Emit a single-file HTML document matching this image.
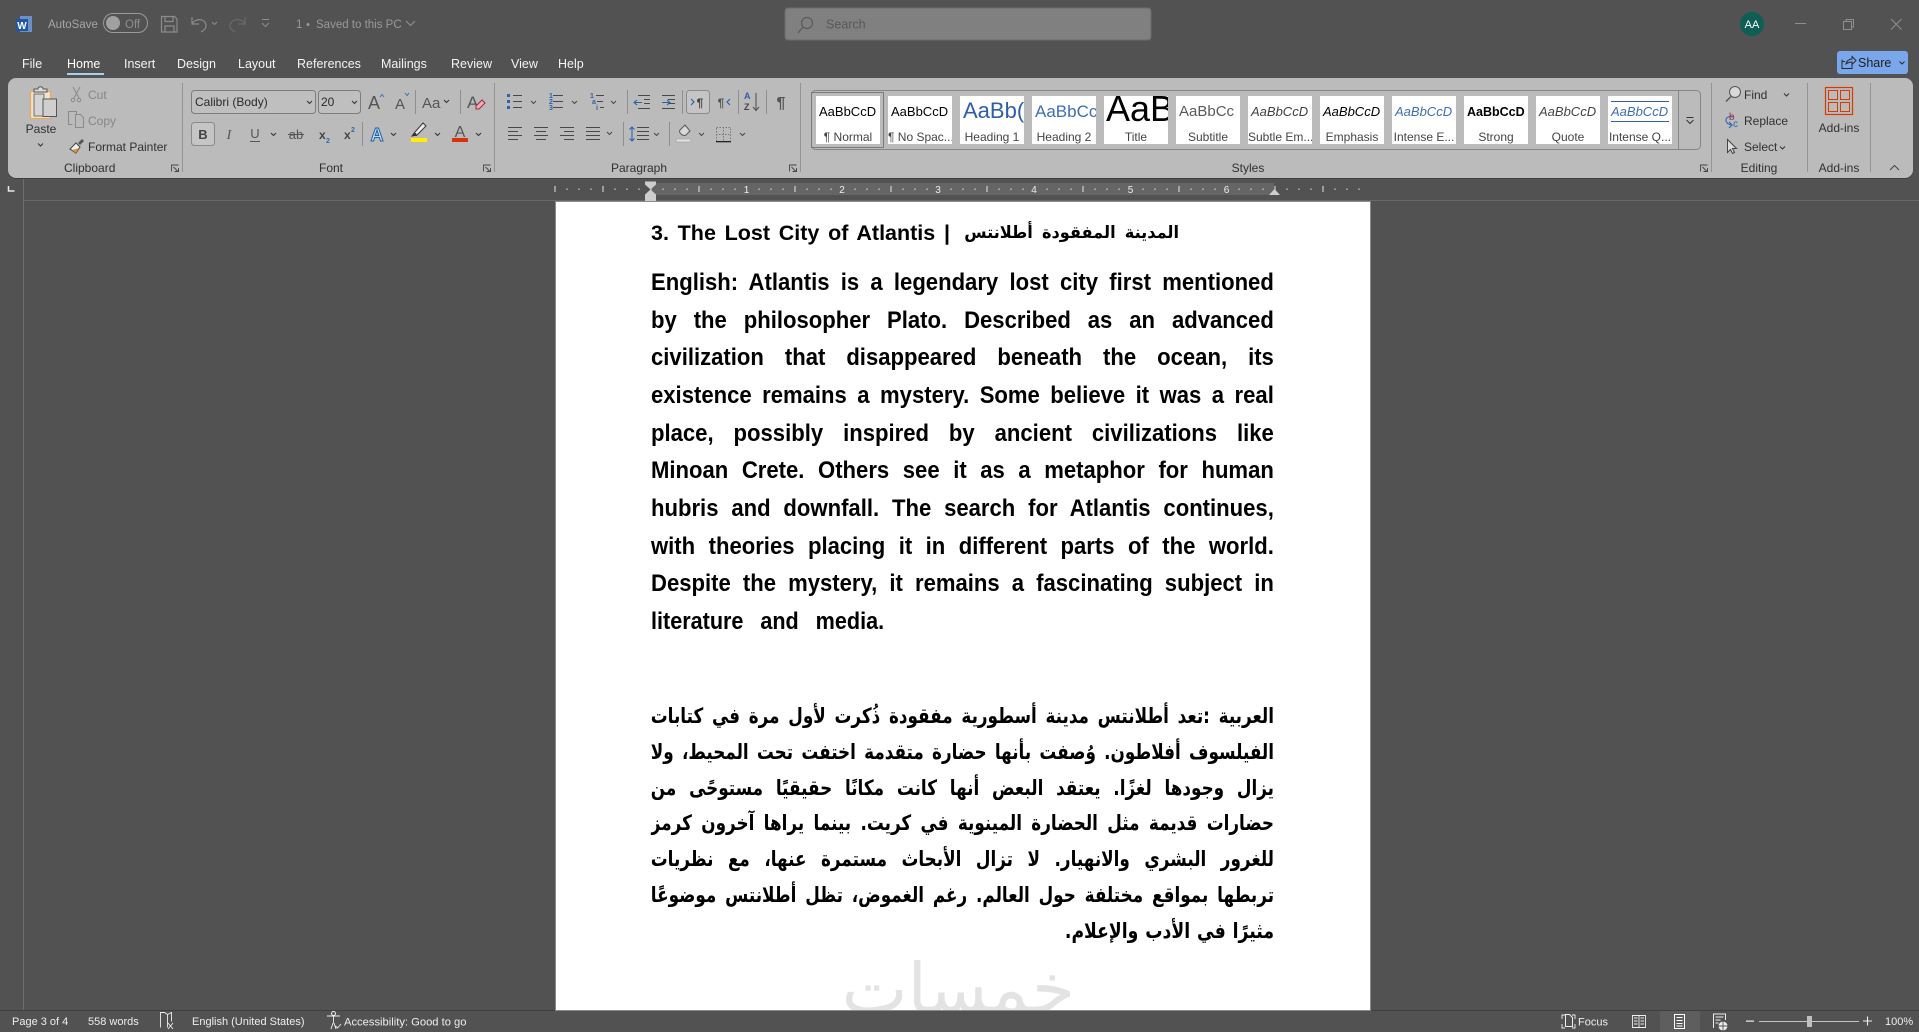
<!DOCTYPE html>
<html lang="en"><head><meta charset="utf-8"><title>Word</title>
<style>
html,body{margin:0;padding:0;width:1919px;height:1032px;overflow:hidden;background:#525252}
body{position:relative;font-family:"Liberation Sans",sans-serif}
svg{position:absolute;left:0;top:0}
svg text{font-family:"Liberation Sans",sans-serif;font-size:12px;fill:#303030}
#page{position:absolute;left:556px;top:202px;width:814px;height:808px;background:#fff;overflow:hidden;box-shadow:0 0 0 1px #8a8a8a}
.l{position:absolute;white-space:normal;color:#000;font-weight:bold;text-align:justify;text-align-last:justify;height:36px;line-height:36px;overflow:hidden}
.e{font-family:"Liberation Sans",sans-serif;font-size:24px;left:95px;transform-origin:0 50%;transform:scaleX(.92);width:677px}
.a{font-family:"DejaVu Sans",sans-serif;font-size:21px;direction:rtl;transform-origin:100% 50%;transform:scaleX(.8);right:96px;width:779px}
.tile{position:absolute;top:96px;width:64px;height:48px;background:#fff;overflow:hidden}
.tile b{position:absolute;left:3px;top:0;height:32px;line-height:32px;white-space:nowrap;font-weight:normal;font-size:13px;color:#000}
.tile i{position:absolute;left:0;right:0;top:33px;font-style:normal;text-align:center;font-size:12px;line-height:16px;color:#444;white-space:nowrap;overflow:hidden}
</style></head><body>

<svg width="1919" height="1032" viewBox="0 0 1919 1032" xmlns="http://www.w3.org/2000/svg">
<!-- lines behind page -->
<rect x="23" y="178" width="1" height="832" fill="#6e6e6e"/>
<rect x="24" y="200" width="1895" height="1" fill="#676767"/>

<!-- title bar -->
<rect x="20" y="16" width="12" height="16" fill="#6d8fc4"/>
<rect x="16" y="19" width="12" height="12" fill="#1f57a8"/>
<text x="22" y="29" text-anchor="middle" style="font-size:10px;font-weight:bold;fill:#fff">W</text>
<text x="48" y="28" style="font-size:11.5px;fill:#a6a6a6">AutoSave</text>
<rect x="103.500" y="13.500" width="44" height="19" rx="9.500" fill="none" stroke="#9a9a9a"/>
<circle cx="113" cy="23" r="7" fill="#a0a0a0"/>
<text x="125" y="28" style="font-size:11.5px;fill:#8f8f8f">Off</text>
<g fill="none" stroke="#8c8c8c" stroke-width="1.200">
<path d="M161.500 16.500h13l2.500 2.500v13h-15.500z"/><path d="M165 16.500v5h8v-5M165 32v-6h9v6"/>
<path d="M192 17v7h7M192 24c3-6 13-6 14 1 .5 4-3 6-5 7"/>
<path d="M212 22l2.500 2.500L217 22" stroke-width="1"/>
<path d="M245 17v7h-7M245 24c-3-6-13-6-15 1-.5 4 3 6 5 7" stroke="#6a6a6a"/>
<path d="M262 19.500h7M262 23l3.500 3.500L269 23" stroke-width="1"/>
<path d="M406 21l4.500 4.500L415 21"/>
</g>
<text x="296" y="28" style="font-size:11.5px;fill:#999">1</text>
<circle cx="308" cy="24.500" r="1.500" fill="#999"/>
<text x="316" y="28" style="font-size:11.5px;fill:#999">Saved to this PC</text>

<!-- search -->
<rect x="785" y="8" width="366" height="32" rx="3" fill="#808080" stroke="#6b6b6b"/>
<circle cx="807" cy="23" r="5.500" fill="none" stroke="#5b5b5b" stroke-width="1.200"/>
<path d="M803 27l-5 6" stroke="#5b5b5b" stroke-width="1.300"/>
<text x="826" y="28.500" style="font-size:12.500px;fill:#575757">Search</text>

<!-- window controls -->
<circle cx="1752" cy="24" r="12" fill="#0e5e55"/>
<text x="1752" y="28" text-anchor="middle" style="font-size:11px;fill:#fff">AA</text>
<g fill="none" stroke="#8f8f8f" stroke-width="1">
<path d="M1795 23.500h11"/><rect x="1843.500" y="21.500" width="8" height="8"/><path d="M1846 21.500v-2h7.500v7.500h-2"/>
<path d="M1891 19l10.500 10.500M1901.500 19L1891 29.500"/>
</g>

<!-- share -->
<rect x="1837" y="51" width="71" height="23" rx="3" fill="#7aa7ec"/>
<path d="M1842 59.500v9h10v-4M1842 61.500h3M1846 64c.5-3 3-5 6-5v-2.500l4 4-4 4v-2.500c-2 0-4 .5-6 2z" fill="none" stroke="#2a2a2a"/>
<text x="1858" y="67" style="font-size:12.500px;fill:#1e1e1e">Share</text>
<path d="M1899.500 61.500l2.500 2.500 2.500-2.500" fill="none" stroke="#2a2a2a"/>

<!-- tabs -->
<g style="font-size:13px">
<text x="22" y="68" style="font-size:12.500px;fill:#f4f4f4">File</text>
<text x="67" y="68" style="font-size:12.500px;fill:#fff;font-weight:400">Home</text>
<text x="124" y="68" style="font-size:12.500px;fill:#f4f4f4">Insert</text>
<text x="177" y="68" style="font-size:12.500px;fill:#f4f4f4">Design</text>
<text x="238" y="68" style="font-size:12.500px;fill:#f4f4f4">Layout</text>
<text x="297" y="68" style="font-size:12.500px;fill:#f4f4f4">References</text>
<text x="381" y="68" style="font-size:12.500px;fill:#f4f4f4">Mailings</text>
<text x="451" y="68" style="font-size:12.500px;fill:#f4f4f4">Review</text>
<text x="511" y="68" style="font-size:12.500px;fill:#f4f4f4">View</text>
<text x="558" y="68" style="font-size:12.500px;fill:#f4f4f4">Help</text>
</g>
<rect x="67" y="73" width="37" height="2" fill="#a6d0f2"/>

<!-- ribbon -->
<rect x="8" y="79" width="1905" height="100" rx="8" fill="#3e3e3e"/>
<rect x="8" y="78" width="1905" height="100" rx="8" fill="#bbb"/>
<g fill="#949494">
<rect x="182" y="83" width="1" height="89"/><rect x="494" y="83" width="1" height="89"/><rect x="800" y="83" width="1" height="89"/>
<rect x="1711" y="83" width="1" height="89"/><rect x="1807" y="83" width="1" height="89"/><rect x="1870" y="83" width="1" height="89"/>
</g>

<!-- clipboard -->
<path d="M30.500 91.500h20v27h-20z" fill="#f2e4cb" stroke="#e9a860" stroke-width="1.300"/>
<path d="M34 92v-3h4c0-3 5-3 5 0h4v3z" fill="#ddd" stroke="#555"/>
<rect x="34" y="94" width="10" height="22" fill="#d4d4d4" stroke="#555" stroke-width=".8"/>
<rect x="43" y="99" width="13.500" height="17.500" fill="#cfcfcf" stroke="#555"/>
<text x="41" y="133" text-anchor="middle">Paste</text>
<path d="M38 143.500l2.500 2.500 2.500-2.500" fill="none" stroke="#333"/>
<g fill="none" stroke="#8a8a8a">
<path d="M73 87l6 11M80 87l-6 11"/><circle cx="73" cy="100" r="1.800"/><circle cx="79" cy="100" r="1.800"/>
<path d="M72.500 124.500h-4v-13h8v3"/><path d="M75.500 114.500h5l3 3v10h-8z"/>
</g>
<text x="88" y="99" style="fill:#868686">Cut</text>
<text x="88" y="125" style="fill:#868686">Copy</text>
<path d="M70 149l6-6 4 4-4 6z" fill="#f2f2f2" stroke="#444"/>
<path d="M72 150l4 3 3-5z" fill="#e8912d"/>
<path d="M78 143l4-4 2 2-4 4z" fill="#555"/>
<text x="88" y="151">Format Painter</text>
<text x="64" y="172">Clipboard</text>

<g fill="none" stroke="#444" stroke-width=".9" id="launch">
<path d="M171.500 171.500v-6.500h7M178.500 168v3.500h-4M173.500 167l4.500 4.500"/>
<path d="M483.500 171.500v-6.500h7M490.500 168v3.500h-4M485.500 167l4.500 4.500"/>
<path d="M789.500 171.500v-6.500h7M796.500 168v3.500h-4M791.500 167l4.500 4.500"/>
<path d="M1700.500 171.500v-6.500h7M1707.500 168v3.500h-4M1702.500 167l4.500 4.500"/>
</g>

<!-- font -->
<rect x="191.500" y="90.500" width="124" height="23" rx="3" fill="#bfbfbf" stroke="#7d7d7d"/>
<rect x="318.500" y="90.500" width="42" height="23" rx="3" fill="#bfbfbf" stroke="#7d7d7d"/>
<text x="195" y="106" style="fill:#2a2a2a">Calibri (Body)</text>
<text x="321" y="106" style="fill:#2a2a2a">20</text>
<g fill="none" stroke="#333">
<path d="M307 101l2.500 2.500 2.500-2.500M352 101l2.500 2.500 2.500-2.500M444 100l2.500 2.500 2.500-2.500"/>
</g>
<text x="368" y="109" style="font-size:18px;fill:#555">A</text>
<path d="M380 97l2-2.500 2 2.500" fill="none" stroke="#3a6fb0"/>
<text x="395" y="109" style="font-size:15px;fill:#555">A</text>
<path d="M405 93l2 2.500 2-2.500" fill="none" stroke="#3a6fb0"/>
<rect x="415" y="90" width="1" height="24" fill="#8f8f8f"/>
<text x="422" y="108" style="font-size:15px;fill:#555">Aa</text>
<rect x="460" y="90" width="1" height="24" fill="#8f8f8f"/>
<text x="467" y="108" style="font-size:17px;fill:#555">A</text>
<path d="M476 106l6-6 3 3-6 6h-3z" fill="#e8b0b8" stroke="#a0283a"/>

<rect x="191.500" y="122.500" width="23" height="23" rx="3" fill="#c5c5c5" stroke="#8a8a8a"/>
<text x="203" y="139" text-anchor="middle" style="font-weight:bold;font-size:13px;fill:#444">B</text>
<text x="229" y="139" text-anchor="middle" style="font-family:'Liberation Serif',serif;font-style:italic;font-size:14px;fill:#555">I</text>
<text x="255" y="138" text-anchor="middle" style="font-size:13px;fill:#555">U</text>
<rect x="250" y="141" width="10" height="1" fill="#555"/>
<text x="296" y="139" text-anchor="middle" style="font-size:13px;fill:#555">ab</text>
<rect x="288" y="134" width="16" height="1" fill="#555"/>
<text x="319" y="139" style="font-size:12px;fill:#444;font-weight:bold">x</text>
<text x="326" y="143" style="font-size:7px;fill:#2b6cb0;font-weight:bold">2</text>
<text x="344" y="139" style="font-size:12px;fill:#444;font-weight:bold">x</text>
<text x="351" y="132" style="font-size:7px;fill:#2b6cb0;font-weight:bold">2</text>
<rect x="362" y="122" width="1" height="24" fill="#8f8f8f"/>
<text x="377" y="141" text-anchor="middle" style="font-size:18px;font-weight:bold;fill:#bfe0f5;stroke:#1f5fa8;stroke-width:1">A</text>
<path d="M412 136l3-4 8-9 3 3-9 9z" fill="#eee" stroke="#333"/>
<path d="M412 136h5l-1-3-2 0z" fill="#333"/>
<rect x="411" y="138" width="16" height="4" fill="#ffee00"/>
<text x="460" y="137" text-anchor="middle" style="font-size:16px;fill:#555">A</text>
<rect x="452" y="138" width="16" height="4" fill="#d9310b"/>
<g fill="none" stroke="#333">
<path d="M271 133l2.500 2.500 2.500-2.500M391 133l2.500 2.500 2.500-2.500M435 133l2.500 2.500 2.500-2.500M476 133l2.500 2.500 2.500-2.500"/>
</g>
<text x="331" y="172" text-anchor="middle">Font</text>

<!-- paragraph -->
<g fill="#2b62ad">
<rect x="507" y="94" width="3" height="3"/><rect x="507" y="100" width="3" height="3"/><rect x="507" y="106" width="3" height="3"/>
</g>
<g fill="none" stroke="#484848">
<path d="M513 95.500h9M513 101.500h9M513 107.500h9M553 95.500h10M553 101.500h10M553 107.500h10M596 95.500h8M597 101.500h6M600 107.500h4"/>
<path d="M531 101l2.500 2.500 2.500-2.500M572 101l2.500 2.500 2.500-2.500M611 101l2.500 2.500 2.500-2.500"/>
<path d="M508 127.500h14M508 131.500h10M508 135.500h14M508 139.500h10M534 127.500h14M536 131.500h10M534 135.500h14M536 139.500h10M560 127.500h14M564 131.500h10M560 135.500h14M564 139.500h10M586 127.500h14M586 131.500h14M586 135.500h14M586 139.500h14" stroke-width="1"/>
<path d="M607 132l2.500 2.500 2.500-2.500M654 133l2.500 2.500 2.500-2.500M699 133l2.500 2.500 2.500-2.500M740 133l2.500 2.500 2.500-2.500"/>
<path d="M637 127.500h12M637 131.500h12M637 135.500h12M637 139.500h12"/>
<path d="M638 95.500h12M644 99.500h6M644 103.500h6M638 108.500h12M662 95.500h13M668 99.500h7M668 103.500h7M662 108.500h13"/>
</g>
<g>
<text x="549" y="98" style="font-size:7px;font-weight:bold;fill:#2b62ad">1</text><text x="549" y="104" style="font-size:7px;font-weight:bold;fill:#2b62ad">2</text><text x="549" y="110" style="font-size:7px;font-weight:bold;fill:#2b62ad">3</text>
<text x="590" y="98" style="font-size:7px;font-weight:bold;fill:#2b62ad">1</text><text x="592" y="104" style="font-size:7px;font-weight:bold;fill:#2b62ad">a</text><text x="596" y="110" style="font-size:7px;font-weight:bold;fill:#2b62ad">i</text>
</g>
<path d="M634 102.500h8M637 100l-3 2.500 3 2.500M662 102.500h8M667 100l3 2.500-3 2.500" fill="none" stroke="#2b62ad" stroke-width="1.100"/>
<path d="M632 127v14M629.500 129.500l2.500-2.500 2.500 2.500M629.500 138.500l2.500 2.500 2.500-2.500" fill="none" stroke="#2b62ad" stroke-width="1.100"/>
<g fill="#8f8f8f">
<rect x="627" y="90" width="1" height="24"/><rect x="682" y="90" width="1" height="24"/><rect x="738" y="90" width="1" height="24"/><rect x="766" y="90" width="1" height="24"/><rect x="623" y="122" width="1" height="24"/><rect x="669" y="122" width="1" height="24"/>
</g>
<rect x="686.500" y="90.500" width="23" height="23" rx="3" fill="#c5c5c5" stroke="#8a8a8a"/>
<text x="700" y="107" text-anchor="middle" style="font-size:12px;font-weight:bold;fill:#444">¶</text>
<path d="M691 99l3 3-3 3" fill="none" stroke="#2b62ad" stroke-width="1.200"/>
<text x="721" y="107" text-anchor="middle" style="font-size:12px;font-weight:bold;fill:#555">¶</text>
<path d="M730 99l-3 3 3 3" fill="none" stroke="#2b62ad" stroke-width="1.200"/>
<text x="744" y="99" style="font-size:9px;font-weight:bold;fill:#2b62ad">A</text>
<text x="744" y="110" style="font-size:9px;font-weight:bold;fill:#444">Z</text>
<path d="M756 93v17M753 107l3 3.500 3-3.500" fill="none" stroke="#555" stroke-width="1.100"/>
<text x="781" y="108" text-anchor="middle" style="font-size:16px;font-weight:bold;fill:#555">¶</text>
<path d="M680 130l5-5 5 6-4 4c-2 1-4 0-5-1-1-1-2-2-1-4z" fill="#d8d8d8" stroke="#555"/>
<rect x="676" y="139" width="15" height="3" fill="#ddd" stroke="#999" stroke-width=".5"/>
<rect x="716.500" y="127.500" width="14" height="14" fill="none" stroke="#777" stroke-dasharray="1.500 1.500"/>
<path d="M723.500 127v14M716 134.500h15" stroke="#777" stroke-dasharray="1.500 1.500"/>
<rect x="716" y="141" width="15" height="1.300" fill="#222"/>
<text x="639" y="172" text-anchor="middle">Paragraph</text>

<!-- gallery frame -->
<rect x="811.500" y="90.500" width="889" height="59" rx="4" fill="none" stroke="#858585"/>
<path d="M1678.500 90.500v59" stroke="#858585"/>
<rect x="811.500" y="92.500" width="72" height="55" fill="none" stroke="#7a7a7a"/>
<path d="M1686.500 117.500h7M1686.500 120l3.500 3.500 3.500-3.500" fill="none" stroke="#333"/>
<text x="1248" y="172" text-anchor="middle">Styles</text>

<!-- editing -->
<circle cx="1735" cy="92" r="5.500" fill="#d8d8d8" stroke="#555"/>
<path d="M1731 96.500l-5 5" stroke="#555" stroke-width="1.400"/>
<text x="1744" y="99">Find</text>
<path d="M1784 93.500l2.500 2.500 2.500-2.500" fill="none" stroke="#333"/>
<text x="1729" y="120" style="font-size:10px;fill:#a0304a">b</text>
<path d="M1733 117c-3-1-7 0-7 3s3 5 6 5M1729 122l3 3-3 3" fill="none" stroke="#2b62ad" stroke-width="1.100"/>
<text x="1733" y="127" style="font-size:10px;fill:#2b62ad">c</text>
<text x="1744" y="125">Replace</text>
<path d="M1727.500 139.500v13l3-3 2 4 2-1-2-4h4z" fill="#ddd" stroke="#444"/>
<text x="1744" y="151">Select</text>
<path d="M1780 146.500l2.500 2.500 2.500-2.500" fill="none" stroke="#333"/>
<text x="1759" y="172" text-anchor="middle">Editing</text>

<!-- add-ins -->
<rect x="1825.500" y="87.500" width="27" height="27" fill="none" stroke="#d83b01" stroke-width="1.200"/>
<g fill="none" stroke="#d83b01"><rect x="1828.500" y="90.500" width="9" height="9"/><rect x="1840.500" y="90.500" width="9" height="9"/><rect x="1828.500" y="102.500" width="9" height="9"/><rect x="1840.500" y="102.500" width="9" height="9"/></g>
<text x="1839" y="132" text-anchor="middle">Add-ins</text>
<text x="1839" y="172" text-anchor="middle">Add-ins</text>
<path d="M1890 170l4.500-4.500 4.500 4.500" fill="none" stroke="#444"/>

<!-- ruler -->
<path d="M8.500 186v5h6" fill="none" stroke="#e8e8e8" stroke-width="1.500"/>
<rect x="650" y="183" width="624" height="12" fill="#656565"/>
<defs>
<pattern id="tk" x="554.500" y="183" width="48" height="12" patternUnits="userSpaceOnUse">
<rect x="0" y="3" width="1" height="6" fill="#e6e6e6"/>
<rect x="12" y="5.500" width="1" height="1.500" fill="#e6e6e6"/><rect x="24" y="5.500" width="1" height="1.500" fill="#e6e6e6"/><rect x="36" y="5.500" width="1" height="1.500" fill="#e6e6e6"/>
</pattern>
</defs>
<rect x="554" y="183" width="806" height="12" fill="url(#tk)"/>
<rect x="742" y="184" width="9" height="10" fill="#656565"/><rect x="838" y="184" width="9" height="10" fill="#656565"/><rect x="934" y="184" width="9" height="10" fill="#656565"/><rect x="1030" y="184" width="9" height="10" fill="#656565"/><rect x="1126" y="184" width="9" height="10" fill="#656565"/><rect x="1222" y="184" width="9" height="10" fill="#656565"/>
<g>
<text x="746.500" y="193" text-anchor="middle" style="font-size:10px;fill:#eee">1</text>
<text x="842" y="193" text-anchor="middle" style="font-size:10px;fill:#eee">2</text>
<text x="938" y="193" text-anchor="middle" style="font-size:10px;fill:#eee">3</text>
<text x="1034" y="193" text-anchor="middle" style="font-size:10px;fill:#eee">4</text>
<text x="1130.500" y="193" text-anchor="middle" style="font-size:10px;fill:#eee">5</text>
<text x="1226.500" y="193" text-anchor="middle" style="font-size:10px;fill:#eee">6</text>
</g>
<path d="M645 181.500h11v3l-5.500 5-5.500-5zM645 194.500l5.500-5 5.500 5v2h-11z" fill="#cdcdcd"/>
<rect x="645" y="196" width="11" height="5" fill="#cdcdcd"/>
<path d="M1269 195l5.500-6 5.500 6z" fill="#cdcdcd"/>

<!-- status bar -->
<rect x="0" y="1010" width="1919" height="1" fill="#3e3e3e"/>
<g>
<text x="12" y="1025" style="font-size:11px;fill:#eee">Page 3 of 4</text>
<text x="88" y="1025" style="font-size:11px;fill:#eee">558 words</text>
<path d="M160.500 1027.500v-15h4l3 2v13M167.500 1014.500l4-2v9" fill="none" stroke="#eee" stroke-width=".9"/>
<path d="M168 1023l5 6M173 1023l-5 6" stroke="#eee" stroke-width=".9"/>
<text x="192" y="1025" style="font-size:11px;fill:#eee">English (United States)</text>
<circle cx="333.500" cy="1013.500" r="2" fill="none" stroke="#eee"/>
<path d="M327 1016h13M333.500 1016v7M331 1029l2-6M336 1029l-2-6M335.500 1026l2 2 3.500-4" fill="none" stroke="#eee" stroke-width=".9"/>
<text x="344" y="1025.500" style="font-size:11.200px;fill:#eee">Accessibility: Good to go</text>

<path d="M1562 1019v-4h3M1572 1015h3v4M1562 1024v4h3M1572 1028h3v-4" fill="none" stroke="#eee" stroke-width=".9"/>
<path d="M1565.500 1014.500h4l3 3v9h-7z" fill="none" stroke="#eee"/>
<text x="1578" y="1025.500" style="font-size:11px;fill:#eee">Focus</text>
<path d="M1632.500 1015.500h6.500v12h-6.500zM1639 1015.500h6.500v12h-6.500zM1634 1018h3.500M1634 1021h3.500M1634 1024h3.500M1640.500 1018h3.500M1640.500 1021h3.500M1640.500 1024h3.500" fill="none" stroke="#eee" stroke-width=".9"/>
<rect x="1660" y="1011" width="40" height="21" fill="#5e5e5e"/>
<path d="M1674.500 1014.500h10v14h-10zM1676.500 1017.500h6M1676.500 1020.500h6M1676.500 1023.500h6M1676.500 1026h6" fill="none" stroke="#fff"/>
<path d="M1713.500 1028v-14h12v6M1715.500 1017h8M1715.500 1020h5M1715.500 1023h3" fill="none" stroke="#eee"/>
<circle cx="1723" cy="1026" r="4.500" fill="#eee"/>
<path d="M1718.500 1026h9M1723 1021.500v9" stroke="#525252" stroke-width=".9"/>
<rect x="1746" y="1020.500" width="8" height="1.200" fill="#eee"/>
<rect x="1759" y="1021" width="100" height="1" fill="#c4c4c4"/>
<rect x="1807" y="1016" width="5" height="11" fill="#c0c0c0"/>
<path d="M1863 1021h9M1867.500 1016.500v9" stroke="#eee" stroke-width="1.100"/>
<text x="1885" y="1025" style="font-size:11px;fill:#eee">100%</text>
</g>
</svg>

<!-- style gallery tiles -->
<div class="tile" style="left:816px"><b>AaBbCcD</b><i>¶ Normal</i></div>
<div class="tile" style="left:888px"><b>AaBbCcD</b><i>¶ No Spac...</i></div>
<div class="tile" style="left:960px"><b style="font-size:22px;color:#2f5ea8;top:-1px">AaBb(</b><i>Heading 1</i></div>
<div class="tile" style="left:1032px"><b style="font-size:17px;color:#3d6db5;top:0">AaBbCc</b><i>Heading 2</i></div>
<div class="tile" style="left:1104px"><b style="font-size:36px;top:-3px;left:2px">AaB</b><i>Title</i></div>
<div class="tile" style="left:1176px"><b style="font-size:15px;color:#5a5a5a;top:0">AaBbCc</b><i>Subtitle</i></div>
<div class="tile" style="left:1248px"><b style="font-style:italic;color:#404040">AaBbCcD</b><i>Subtle Em...</i></div>
<div class="tile" style="left:1320px"><b style="font-style:italic">AaBbCcD</b><i>Emphasis</i></div>
<div class="tile" style="left:1392px"><b style="font-style:italic;color:#3d6db5">AaBbCcD</b><i>Intense E...</i></div>
<div class="tile" style="left:1464px"><b style="font-weight:bold;font-size:12.500px">AaBbCcD</b><i>Strong</i></div>
<div class="tile" style="left:1536px"><b style="font-style:italic;color:#444">AaBbCcD</b><i>Quote</i></div>
<div class="tile" style="left:1608px"><b style="font-style:italic;color:#3d6db5">AaBbCcD</b><div style="position:absolute;left:3px;right:3px;top:5px;height:19px;border-top:1px solid #2f5ea8;border-bottom:1px solid #2f5ea8"></div><i>Intense Q...</i></div>

<div id="page">
<div class="l e" style="top:13px;font-size:21.500px;width:299px;transform:none">3. The Lost City of Atlantis |</div>
<div class="l a" style="top:13px;font-size:17px;right:191px;width:226px;transform:scaleX(.95)">المدينة المفقودة أطلانتس</div>

<div class="l e" style="top:63px">English: Atlantis is a legendary lost city first mentioned</div>
<div class="l e" style="top:101px">by the philosopher Plato. Described as an advanced</div>
<div class="l e" style="top:138px">civilization that disappeared beneath the ocean, its</div>
<div class="l e" style="top:176px">existence remains a mystery. Some believe it was a real</div>
<div class="l e" style="top:214px">place, possibly inspired by ancient civilizations like</div>
<div class="l e" style="top:251px">Minoan Crete. Others see it as a metaphor for human</div>
<div class="l e" style="top:289px">hubris and downfall. The search for Atlantis continues,</div>
<div class="l e" style="top:327px">with theories placing it in different parts of the world.</div>
<div class="l e" style="top:364px">Despite the mystery, it remains a fascinating subject in</div>
<div class="l e" style="top:402px;width:259px;transform:scaleX(.9)">literature and media.</div>

<div class="l a" style="top:496px">العربية :تعد أطلانتس مدينة أسطورية مفقودة ذُكرت لأول مرة في كتابات</div>
<div class="l a" style="top:532px">الفيلسوف أفلاطون. وُصفت بأنها حضارة متقدمة اختفت تحت المحيط، ولا</div>
<div class="l a" style="top:568px">يزال وجودها لغزًا. يعتقد البعض أنها كانت مكانًا حقيقيًا مستوحًى من</div>
<div class="l a" style="top:603px">حضارات قديمة مثل الحضارة المينوية في كريت. بينما يراها آخرون كرمز</div>
<div class="l a" style="top:639px">للغرور البشري والانهيار. لا تزال الأبحاث مستمرة عنها، مع نظريات</div>
<div class="l a" style="top:675px">تربطها بمواقع مختلفة حول العالم. رغم الغموض، تظل أطلانتس موضوعًا</div>
<div class="l a" style="top:711px;width:255px;transform:scaleX(.82)">مثيرًا في الأدب والإعلام.</div>

<div style="position:absolute;left:289px;top:742px;width:230px;text-align:center;font-family:'DejaVu Sans',sans-serif;font-weight:normal;font-size:70px;line-height:90px;color:#e3e3e3;white-space:nowrap;direction:rtl">خمسات</div>
</div>
</body></html>
